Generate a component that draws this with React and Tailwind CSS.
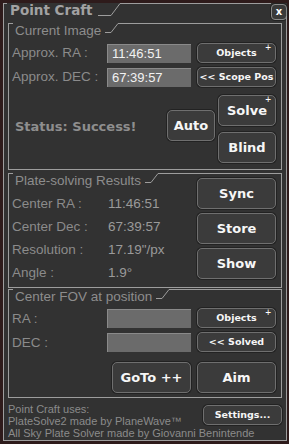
import React from "react";

const LINE = "border-[#9d9d9d]";
const REG = "font-['Liberation_Sans',Arial,sans-serif]";
const BOLD = "font-['DejaVu_Sans',sans-serif] font-bold";

function Diag({ w, h }) {
  return (
    <svg width={w} height={h} className="shrink-0 block">
      <line x1="0" y1={h - 0.5} x2={w} y2="0.5" stroke="#9d9d9d" strokeWidth="1" />
    </svg>
  );
}

function GroupHeader({ title }) {
  return (
    <div className="flex h-[10px]">
      <div className={`w-[4px] border-t ${LINE}`} />
      <div className={`${REG} text-[13.5px] leading-[13px] text-[#8d8d8d] whitespace-nowrap pl-[2px] pr-[4px] pt-[1px]`}>{title}</div>
      <div className={`w-[6px] border-b ${LINE}`} />
      <Diag w={7} h={10} />
      <div className={`flex-1 border-t ${LINE}`} />
    </div>
  );
}

function Btn({ children, className = "", plus = false, small = false }) {
  return (
    <div
      className={`relative flex items-center justify-center rounded-[5px] border border-[#6f6f6f] bg-[#3b3b3b] shadow-[0_0_0_1px_#222] text-[#f6f6f6] ${BOLD} ${small ? "text-[9.5px]" : "text-[13px]"} ${className}`}
    >
      {children}
      {plus && (
        <span className={`absolute right-[4px] top-[-1px] text-[10px] leading-[10px] font-normal ${REG} text-white`}>+</span>
      )}
    </div>
  );
}

function Input({ value = "" }) {
  return (
    <div className={`w-[84px] h-[19px] bg-[#6b6b6b] border-l border-t border-[#8a8a8a] flex items-center pl-[4px] text-[13px] text-[#f2f2f2] ${REG}`}>
      {value}
    </div>
  );
}

function Label({ children, className = "" }) {
  return <div className={`${REG} text-[13.5px] text-[#8b8b8b] whitespace-nowrap ${className}`}>{children}</div>;
}

export default function App() {
  return (
    <div className="w-[289px] h-[444px] bg-[#2e1b1b] overflow-hidden pt-[3px] pl-[3px]">
      <div className="w-[284px] h-[438px] bg-[#323232] flex flex-col">
        {/* Window title */}
        <div className={`flex h-[13px] border-l ${LINE}`}>
          <div className={`w-[3px] border-t ${LINE}`} />
          <div className={`${BOLD} text-[13.5px] leading-[13px] text-[#a2a2a2] whitespace-nowrap pl-[3px] pr-[5px] pt-[1px]`}>Point Craft</div>
          <div className={`w-[13px] border-b ${LINE}`} />
          <Diag w={9} h={13} />
          <div className={`flex-1 border-t ${LINE}`} />
          <div className={`w-[16px] h-[16px] mt-[1px] rounded-[4px] border border-[#8a8a8a] bg-[#3a3a3a] shadow-[0_0_0_1px_#222] flex items-center justify-center text-white text-[10px] leading-[10px] ${BOLD}`}>x</div>
        </div>

        <div className={`flex-1 flex flex-col border-l border-r border-b ${LINE} px-[4px] pt-[7px]`}>
          {/* Current Image */}
          <div className={`h-[147px] flex flex-col border-l border-r border-b ${LINE}`}>
            <GroupHeader title="Current Image" />
            <div className="mt-[10px] flex items-center h-[20px] pr-[5px]">
              <Label className="flex-1 pl-[3px]">Approx. RA :</Label>
              <Input value="11:46:51" />
              <Btn small plus className="ml-[6px] w-[79px] h-[20px]">Objects</Btn>
            </div>
            <div className="mt-[4px] flex items-center h-[20px] pr-[5px]">
              <Label className="flex-1 pl-[3px]">Approx. DEC :</Label>
              <Input value="67:39:57" />
              <Btn small className="ml-[6px] w-[79px] h-[20px]">&lt;&lt; Scope Pos</Btn>
            </div>
            <div className="mt-[8px] flex pr-[5px]">
              <div className={`flex-1 pl-[6px] pt-[22px] ${BOLD} text-[13px] text-[#8e8e8e] whitespace-nowrap`}>Status: Success!</div>
              <Btn className="mt-[15px] w-[48px] h-[31px]">Auto</Btn>
              <div className="ml-[3px] flex flex-col gap-[6px]">
                <Btn plus className="w-[58px] h-[31px]">Solve</Btn>
                <Btn className="w-[58px] h-[31px]">Blind</Btn>
              </div>
            </div>
          </div>

          {/* Plate-solving Results */}
          <div className={`mt-[3px] h-[115px] flex flex-col border-l border-r border-b ${LINE}`}>
            <GroupHeader title="Plate-solving Results" />
            <div className="flex pr-[5px]">
              <div className="flex-1 pt-[10px] pl-[3px]">
                {[
                  ["Center RA :", "11:46:51"],
                  ["Center Dec :", "67:39:57"],
                  ["Resolution :", "17.19\"/px"],
                  ["Angle :", "1.9°"],
                ].map(([l, v]) => (
                  <div key={l} className="flex items-center h-[23px]">
                    <Label className="w-[96px]">{l}</Label>
                    <div className={`${REG} text-[13.5px] text-[#9a9a9a]`}>{v}</div>
                  </div>
                ))}
              </div>
              <div className="-mt-[5px] flex flex-col gap-[4px]">
                <Btn className="w-[79px] h-[31px]">Sync</Btn>
                <Btn className="w-[79px] h-[31px]">Store</Btn>
                <Btn className="w-[79px] h-[31px]">Show</Btn>
              </div>
            </div>
          </div>

          {/* Center FOV */}
          <div className={`mt-[1px] h-[109px] flex flex-col border-l border-r border-b ${LINE}`}>
            <GroupHeader title="Center FOV at position" />
            <div className="mt-[9px] flex items-center h-[20px] pr-[5px]">
              <Label className="flex-1 pl-[3px] pt-[3px]">RA :</Label>
              <Input />
              <Btn small plus className="ml-[6px] w-[79px] h-[20px]">Objects</Btn>
            </div>
            <div className="mt-[4px] flex items-center h-[20px] pr-[5px]">
              <Label className="flex-1 pl-[3px] pt-[3px]">DEC :</Label>
              <Input />
              <Btn small className="ml-[6px] w-[79px] h-[20px]">&lt;&lt; Solved</Btn>
            </div>
            <div className="mt-[10px] flex justify-end gap-[6px] pr-[5px]">
              <Btn className="w-[79px] h-[31px]">GoTo ++</Btn>
              <Btn className="w-[79px] h-[31px]">Aim</Btn>
            </div>
          </div>

          {/* Footer */}
          <div className="grid pt-[5px]">
            <div className={`col-start-1 row-start-1 ${REG} text-[11px] leading-[12px] text-[#8b8b8b] whitespace-nowrap`}>
              <div>Point Craft uses:</div>
              <div>PlateSolve2 made by PlaneWave™</div>
              <div>All Sky Plate Solver made by Giovanni Benintende</div>
            </div>
            <Btn small className="col-start-1 row-start-1 justify-self-end self-start mt-[2px] w-[79px] h-[20px]">Settings...</Btn>
          </div>
        </div>
      </div>
    </div>
  );
}
